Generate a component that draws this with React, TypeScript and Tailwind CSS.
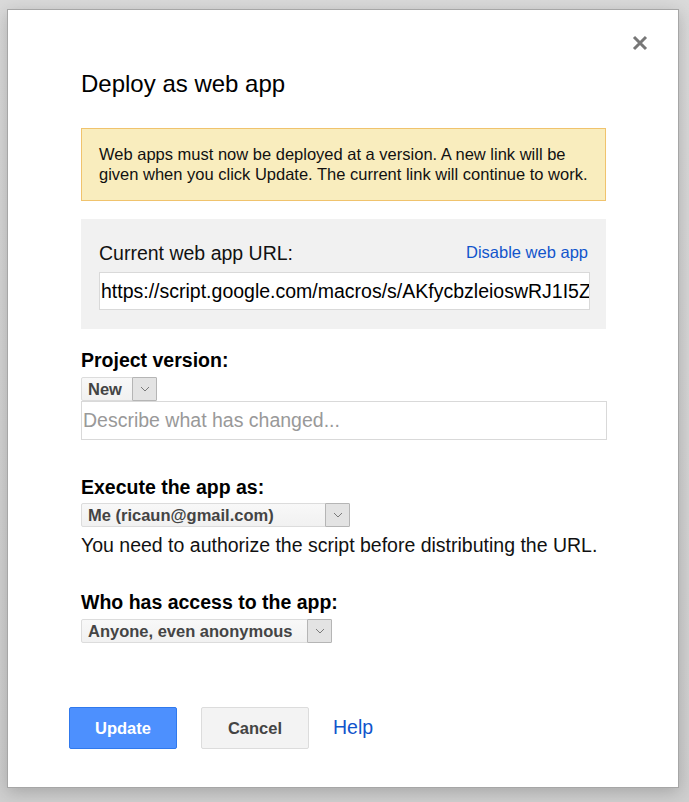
import React from "react";

const font = { fontFamily: '"Liberation Sans", Arial, sans-serif' };

const Chevron = () => (
  <svg width="10" height="6" viewBox="0 0 10 6" fill="none">
    <path d="M1 1l4 4 4-4" stroke="#7a7a7a" strokeWidth="1" />
  </svg>
);

// gmail-style select box, fixed width
const Select = ({ label, width }: { label: string; width: string }) => (
  <div
    className={`flex h-[24px] items-stretch rounded-[2px] border border-[#dcdcdc] bg-gradient-to-b from-[#f8f8f8] to-[#f1f1f1] ${width}`}
  >
    <span className="flex flex-1 items-center pl-[6px] text-[16.5px] font-bold leading-none text-[#444]">
      {label}
    </span>
    <span className="flex w-[25px] items-center justify-center rounded-[1px] border border-[#b5b5b5] bg-[#e3e3e3] -my-px -mr-px">
      <Chevron />
    </span>
  </div>
);

const App = () => {
  return (
    <div
      className="h-[802px] w-[689px] overflow-hidden bg-gradient-to-b from-[#dadada] to-[#cfcfcf] pl-[7px] pt-[9px]"
      style={font}
    >
      <div className="relative h-[779px] w-[672px] border border-[#a6a6a6] bg-white pl-[73px] pr-[72px] pt-[60px] shadow-[0_4px_16px_rgba(0,0,0,0.2)]">
        {/* close */}
        <button className="absolute right-[30px] top-[25px] h-[16px] w-[16px]">
          <svg width="16" height="16" viewBox="0 0 16 16">
            <path d="M2 2l12 12M14 2L2 14" stroke="#777" strokeWidth="3" />
          </svg>
        </button>

        <h1 className="text-[24px] leading-[28px] text-black">Deploy as web app</h1>

        {/* notice */}
        <div className="mt-[30px] border border-[#f0c36d] bg-[#f9edbe] px-[17px] py-[16px] text-[16.5px] leading-[19.5px] text-[#111]">
          Web apps must now be deployed at a version. A new link will be given when you click Update. The current link
          will continue to work.
        </div>

        {/* current url */}
        <div className="mt-[18px] bg-[#f1f1f1] px-[18px] pb-[19px] pt-[23px]">
          <div className="flex items-baseline justify-between">
            <span className="text-[19.5px] leading-[22px] text-[#111]">Current web app URL:</span>
            <a className="relative -top-[2px] text-[16.5px] leading-[22px] text-[#15c]">Disable web app</a>
          </div>
          <div className="mt-[7px] h-[38px] w-[491px] overflow-hidden whitespace-nowrap border border-[#d9d9d9] bg-white pl-px text-[19.5px] leading-[36px] text-black">
            https://script.google.com/macros/s/AKfycbzleioswRJ1I5Z
          </div>
        </div>

        {/* version */}
        <div className="mt-[20px] text-[19.5px] font-bold leading-[22px] text-black">Project version:</div>
        <div className="mt-[6px]">
          <Select label="New" width="w-[76px]" />
        </div>
        <div className="-mr-px h-[39px] border border-[#d9d9d9] bg-white pl-px text-[19.5px] leading-[37px] text-[#999]">
          Describe what has changed...
        </div>

        {/* execute as */}
        <div className="mt-[36px] text-[19.5px] font-bold leading-[22px] text-black">Execute the app as:</div>
        <div className="mt-[5px]">
          <Select label="Me (ricaun@gmail.com)" width="w-[269px]" />
        </div>
        <div className="mt-[7px] text-[19.5px] leading-[22px] text-[#111]">
          You need to authorize the script before distributing the URL.
        </div>

        {/* access */}
        <div className="mt-[35px] text-[19.5px] font-bold leading-[22px] text-black">Who has access to the app:</div>
        <div className="mt-[6px]">
          <Select label="Anyone, even anonymous" width="w-[251px]" />
        </div>

        {/* actions */}
        <div className="-ml-[12px] mt-[64px] flex items-center gap-[24px]">
          <button className="h-[42px] w-[108px] rounded-[2px] border border-[#3079ed] bg-[#4d90fe] text-[16.5px] font-bold text-white">
            Update
          </button>
          <button className="h-[42px] w-[108px] rounded-[2px] border border-[#dcdcdc] bg-[#f3f3f3] text-[16.5px] font-bold text-[#444]">
            Cancel
          </button>
          <a className="text-[19.5px] text-[#15c]">Help</a>
        </div>
      </div>
    </div>
  );
};

export default App;
